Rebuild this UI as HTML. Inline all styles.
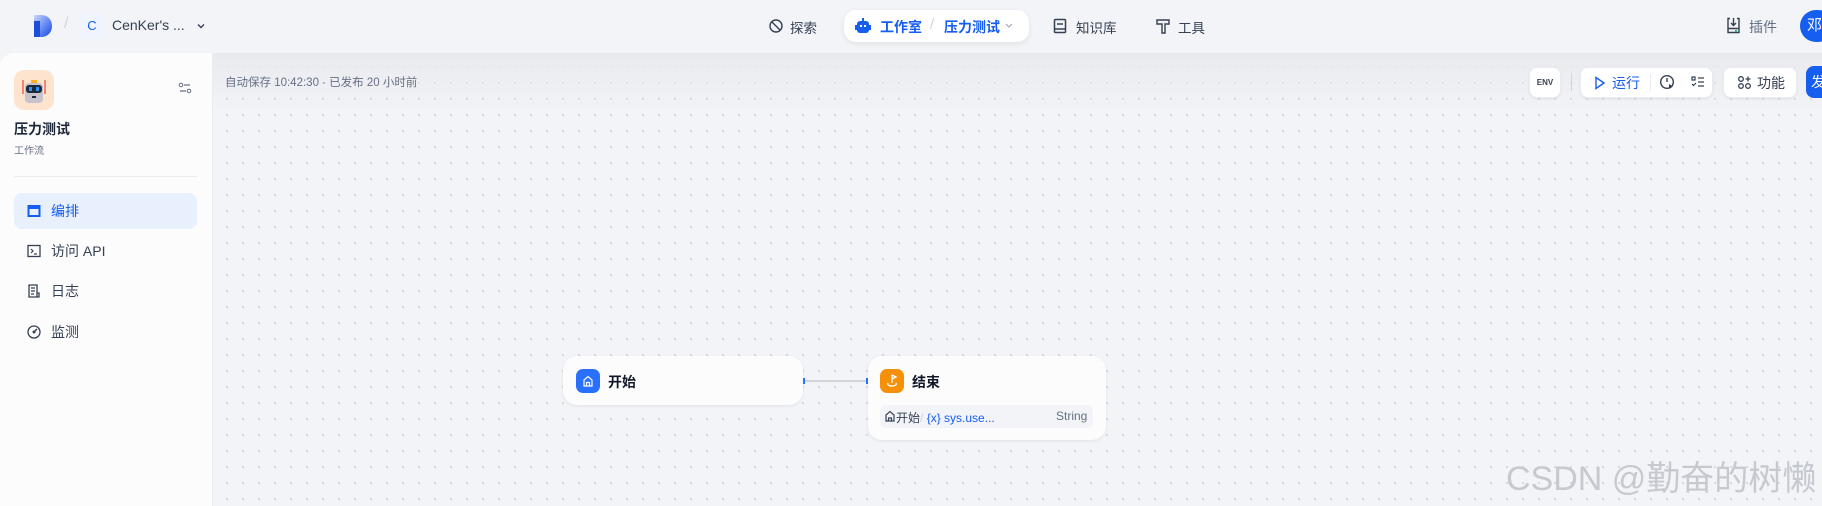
<!DOCTYPE html>
<html><head><meta charset="utf-8"><style>
*{margin:0;padding:0;box-sizing:border-box}
body{width:1822px;height:506px;overflow:hidden;background:#f2f4f7;font-family:"Liberation Sans","Noto Sans CJK SC",sans-serif;position:relative;color:#354052}
.a{position:absolute}
.canvas{position:absolute;left:213px;top:53px;right:0;bottom:0;background-color:#f2f4f7;background-image:radial-gradient(circle,#d3d7de 1px,transparent 1.3px);background-size:16px 16px;background-position:6px 6px}
.shade{position:absolute;left:213px;top:53px;right:0;height:60px;background:linear-gradient(#e8eaee,rgba(242,244,247,0))}
.side{position:absolute;left:0;top:53px;width:213px;bottom:0;background:#fcfcfd;border-top-left-radius:14px;border-right:1px solid #eaecf0}
.nav{font-size:13.5px;color:#354052}
.btn{position:absolute;background:#fff;border-radius:8px;box-shadow:0 1px 2px rgba(16,24,40,.08);border:1px solid #eaecf0}
.node{position:absolute;background:#fcfcfd;border-radius:14px;box-shadow:0 1px 3px rgba(16,24,40,.08)}
.mi{position:absolute;left:14px;width:183px;height:36px;font-size:14px;color:#354052;display:flex;align-items:center;padding-left:13px;border-radius:8px}
.mi svg{margin-right:10px}
</style></head><body>
<div class="canvas"></div>
<div class="shade"></div>

<svg class="a" style="left:32px;top:14px" width="22" height="24" viewBox="0 0 22 24"><defs><linearGradient id="g" x1="0" y1="0" x2="1" y2="1"><stop offset="0" stop-color="#c8d6ff"/><stop offset="1" stop-color="#1447e6"/></linearGradient></defs><path d="M2 1h7c7 0 11 5 11 11s-4 11-11 11H8V7H2z" fill="url(#g)"/><rect x="2" y="7" width="6" height="16" fill="#1d4ed8"/></svg>
<div class="a" style="left:64px;top:15px;color:#d0d5dd;font-size:16px">/</div>
<div class="a" style="left:79px;top:13px;width:26px;height:26px;border-radius:7px;background:#eff4ff;color:#155eef;font-size:13px;text-align:center;line-height:26px">C</div>
<div class="a" style="left:112px;top:17px;font-size:14px;color:#354052">CenKer's ...</div>
<svg class="a" style="left:195px;top:20px" width="12" height="12" viewBox="0 0 12 12"><path d="M3 4.5l3 3 3-3" stroke="#354052" stroke-width="1.4" fill="none"/></svg>

<svg class="a" style="left:768px;top:18px" width="16" height="16" viewBox="0 0 16 16"><circle cx="8" cy="8" r="6" stroke="#354052" stroke-width="1.4" fill="none"/><path d="M4 4l8 8" stroke="#354052" stroke-width="1.4"/></svg>
<div class="a nav" style="left:790px;top:17px">探索</div>
<div class="a" style="left:844px;top:10px;width:185px;height:32px;background:#fff;border-radius:12px;box-shadow:0 2px 6px rgba(16,24,40,.08)"></div>
<svg class="a" style="left:855px;top:17px" width="16" height="18" viewBox="0 0 16 18"><rect x="7" y="1" width="2" height="3" fill="#155eef"/><rect x="2" y="4" width="12" height="12" rx="3" fill="#155eef"/><rect x="5" y="8" width="2" height="2" fill="#fff"/><rect x="9" y="8" width="2" height="2" fill="#fff"/><rect x="0" y="8" width="2" height="5" fill="#155eef"/><rect x="14" y="8" width="2" height="5" fill="#155eef"/></svg>
<div class="a" style="left:880px;top:17px;font-size:14px;font-weight:bold;color:#155eef">工作室</div>
<div class="a" style="left:930px;top:16px;color:#d0d5dd;font-size:15px">/</div>
<div class="a" style="left:944px;top:17px;font-size:14px;font-weight:bold;color:#155eef">压力测试</div>
<svg class="a" style="left:1004px;top:22px" width="10" height="8" viewBox="0 0 10 8"><path d="M2 2l3 3 3-3" stroke="#98a2b3" stroke-width="1" fill="none"/></svg>
<svg class="a" style="left:1053px;top:18px" width="14" height="16" viewBox="0 0 14 16"><rect x="1.5" y="1.5" width="11" height="13" rx="1" stroke="#354052" stroke-width="1.5" fill="none"/><path d="M4 6h6M1.5 11h11" stroke="#354052" stroke-width="1.4"/></svg>
<div class="a nav" style="left:1076px;top:17px">知识库</div>
<svg class="a" style="left:1156px;top:18px" width="14" height="16" viewBox="0 0 14 16"><path d="M1 2h12v4H9v9H6V6H1z" stroke="#354052" stroke-width="1.4" fill="none"/></svg>
<div class="a nav" style="left:1178px;top:17px">工具</div>
<svg class="a" style="left:1726px;top:17px" width="15" height="17" viewBox="0 0 15 17"><path d="M4 1.5H2v14h11v-14h-2M7.5 1v7M5 6l2.5 2.5L10 6M2 11.5h11" stroke="#354052" stroke-width="1.4" fill="none"/><rect x="9" y="13" width="2" height="1.5" fill="#12b76a"/></svg>
<div class="a" style="left:1749px;top:17px;font-size:14px;color:#667085">插件</div>
<div class="a" style="left:1800px;top:10px;width:34px;height:32px;border-radius:16px;background:#155eef;color:#fff;font-size:15px;line-height:32px;padding-left:7px">邓</div>

<div class="side"></div>
<div class="a" style="left:14px;top:70px;width:40px;height:40px;border-radius:10px;background:#fee4cf"></div>
<svg class="a" style="left:22px;top:78px" width="24" height="28" viewBox="0 0 24 28"><path d="M1 2v14M23 2v14" stroke="#f04438" stroke-width="1.2"/><rect x="9" y="2" width="6" height="3" fill="#fdb022"/><rect x="3" y="5" width="18" height="20" rx="4" fill="#c6c3cc"/><rect x="4" y="7" width="16" height="8" rx="3" fill="#1d2939"/><rect x="7" y="9" width="3" height="4" fill="#2e90fa"/><rect x="14" y="9" width="3" height="4" fill="#2e90fa"/><rect x="10" y="18" width="4" height="2" fill="#1d2939"/></svg>
<svg class="a" style="left:178px;top:82px" width="14" height="12" viewBox="0 0 14 12"><circle cx="3" cy="3" r="1.8" stroke="#667085" fill="none"/><path d="M6 3h6M2 9h6" stroke="#667085" stroke-width="1.2"/><circle cx="11" cy="9" r="1.8" stroke="#667085" fill="none"/></svg>
<div class="a" style="left:14px;top:119px;font-size:14px;font-weight:bold;color:#1d2939">压力测试</div>
<div class="a" style="left:14px;top:142px;font-size:10px;color:#667085">工作流</div>
<div class="a" style="left:14px;top:176px;width:183px;height:1px;background:#eaecf0"></div>
<div class="mi" style="top:193px;background:#e8effd;color:#155eef"><svg width="14" height="14" viewBox="0 0 14 14"><rect x="0.5" y="1" width="13" height="12" fill="#155eef"/><rect x="2.5" y="5" width="9" height="6" fill="#e8effd"/></svg>编排</div>
<div class="mi" style="top:233px"><svg width="14" height="14" viewBox="0 0 14 14"><rect x="1" y="1.5" width="12" height="11" stroke="#354052" stroke-width="1.3" fill="none"/><path d="M4 5l2 2-2 2M7 10h3" stroke="#354052" stroke-width="1.2" fill="none"/></svg>访问 API</div>
<div class="mi" style="top:273px"><svg width="14" height="14" viewBox="0 0 14 14"><path d="M2 1h8v12H2zM10 9h2v4h-2" stroke="#354052" stroke-width="1.3" fill="none"/><path d="M4 4h4M4 7h4M4 10h3" stroke="#354052" stroke-width="1.2"/></svg>日志</div>
<div class="mi" style="top:314px"><svg width="14" height="14" viewBox="0 0 14 14"><circle cx="7" cy="7" r="6" stroke="#354052" stroke-width="1.3" fill="none"/><path d="M7 7l3-3" stroke="#354052" stroke-width="1.4"/><circle cx="7" cy="7" r="1.5" fill="#354052"/></svg>监测</div>

<div class="a" style="left:225px;top:74px;font-size:11.5px;color:#667085">自动保存 10:42:30 · 已发布 20 小时前</div>
<div class="btn" style="left:1529px;top:67px;width:32px;height:31px;font-size:8px;font-weight:bold;color:#354052;text-align:center;line-height:29px">ENV</div>
<div class="a" style="left:1571px;top:73px;width:1px;height:18px;background:#d0d5dd"></div>
<div class="btn" style="left:1580px;top:67px;width:133px;height:31px"></div>
<svg class="a" style="left:1594px;top:76px" width="12" height="14" viewBox="0 0 12 14"><path d="M2 1.5l8 5.5-8 5.5z" stroke="#155eef" stroke-width="1.4" fill="none"/></svg>
<div class="a" style="left:1612px;top:73px;font-size:14px;color:#155eef">运行</div>
<div class="a" style="left:1650px;top:74px;width:1px;height:17px;background:#eaecf0"></div>
<svg class="a" style="left:1659px;top:74px" width="16" height="17" viewBox="0 0 16 17"><circle cx="8" cy="8" r="6.3" stroke="#354052" stroke-width="1.4" fill="none"/><path d="M8 4v4" stroke="#354052" stroke-width="1.4"/><path d="M10 10l4 2.5-4 2.5z" fill="#354052"/></svg>
<svg class="a" style="left:1691px;top:75px" width="14" height="14" viewBox="0 0 14 14"><path d="M1 2h3v3H1zM7 3h6M7 7h6M7 11h6M1 9l1.5 1.5L5 8" stroke="#354052" stroke-width="1.2" fill="none"/></svg>
<div class="btn" style="left:1723px;top:67px;width:74px;height:31px"></div>
<svg class="a" style="left:1737px;top:75px" width="15" height="15" viewBox="0 0 15 15"><circle cx="4" cy="4" r="2.3" stroke="#354052" stroke-width="1.3" fill="none"/><circle cx="4" cy="11" r="2.3" stroke="#354052" stroke-width="1.3" fill="none"/><circle cx="11" cy="11" r="2.3" stroke="#354052" stroke-width="1.3" fill="none"/><path d="M11 1.5v5M8.5 4h5" stroke="#354052" stroke-width="1.3"/></svg>
<div class="a" style="left:1757px;top:73px;font-size:14px;color:#354052">功能</div>
<div class="a" style="left:1806px;top:66px;width:30px;height:32px;border-radius:8px;background:#155eef;color:#fff;font-size:14px;line-height:32px;padding-left:5px">发</div>

<div class="node" style="left:563px;top:356px;width:240px;height:49px"></div>
<div class="a" style="left:576px;top:369px;width:24px;height:24px;border-radius:7px;background:#2970ff"></div>
<svg class="a" style="left:581px;top:374px" width="14" height="14" viewBox="0 0 14 14"><path d="M3 12V6l4-3.5L11 6v6zM5.5 12V8.5h3V12" stroke="#fff" stroke-width="1.2" fill="none"/></svg>
<div class="a" style="left:608px;top:372px;font-size:14px;font-weight:bold;color:#101828">开始</div>
<div class="a" style="left:803px;top:378px;width:2px;height:6px;background:#2970ff"></div>
<div class="a" style="left:805px;top:380px;width:61px;height:2px;background:#d0d5dd"></div>
<div class="a" style="left:866px;top:378px;width:2px;height:6px;background:#2970ff"></div>
<div class="node" style="left:868px;top:356px;width:238px;height:84px"></div>
<div class="a" style="left:880px;top:369px;width:24px;height:24px;border-radius:7px;background:#f79009"></div>
<svg class="a" style="left:885px;top:373px" width="14" height="16" viewBox="0 0 14 16"><path d="M7 2v8M7 2l4 2-4 2" stroke="#fff" stroke-width="1.3" fill="none"/><path d="M3 10c-1 2 1 3 4 3s5-1 4-3" stroke="#fff" stroke-width="1.3" fill="none"/></svg>
<div class="a" style="left:912px;top:372px;font-size:14px;font-weight:bold;color:#101828">结束</div>
<div class="a" style="left:880px;top:405px;width:213px;height:23px;border-radius:6px;background:#f2f4f7"></div>
<svg class="a" style="left:884px;top:410px" width="12" height="12" viewBox="0 0 12 12"><path d="M2 11V5l4-3.5L10 5v6zM4.5 11V8h3v3" stroke="#354052" stroke-width="1.2" fill="none"/></svg>
<div class="a" style="left:896px;top:409px;font-size:12px;color:#354052">开始<span style="color:#d0d5dd">/</span> <span style="color:#155eef">{x} sys.use...</span></div>
<div class="a" style="left:1056px;top:409px;font-size:12px;color:#667085">String</div>

<div class="a" style="left:1506px;top:451px;font-size:34px;color:rgba(195,199,206,.95);white-space:nowrap">CSDN @勤奋的树懒</div>
</body></html>
